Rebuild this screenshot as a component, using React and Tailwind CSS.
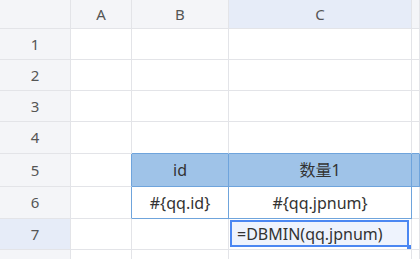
const cols = ['A', 'B', 'C', 'D'];
const rowHeights = [31, 31, 31, 32, 33, 32, 31, 20];

const cells = {
  '5-B': { text: 'id', head: true },
  '5-C': { text: '数量1', head: true },
  '5-D': { text: '', head: true },
  '6-B': { text: '#{qq.id}', body: true },
  '6-C': { text: '#{qq.jpnum}', body: true },
};

const isBlue = (r, c) => (r === 5 && ['B', 'C', 'D'].includes(c)) || (r === 6 && ['B', 'C'].includes(c));

const App = () => {
  return (
    <div
      className="h-[259px] w-[420px] overflow-hidden bg-white text-[16px] text-[#333]"
      style={{ fontFamily: '"Noto Sans", "Noto Sans CJK SC", sans-serif' }}
    >
      <div className="grid grid-cols-[71px_61px_97px_183px_1fr]">
        <div className="h-[29px] border-b border-r border-[#e3e4e8] bg-[#f4f5f8]" />
        {cols.map((c) => (
          <div
            key={c}
            className={`flex h-[29px] items-center justify-center border-b border-r border-[#e3e4e8] text-[15px] text-[#555] ${c === 'C' ? 'bg-[#e6ecf8]' : 'bg-[#f4f5f8]'}`}
          >
            {c !== 'D' && c}
          </div>
        ))}

        {rowHeights.map((h, i) => {
          const r = i + 1;
          return [
            <div
              key={`h${r}`}
              style={{ height: h }}
              className={`flex items-center justify-center border-b border-r border-[#e3e4e8] text-[15px] text-[#555] ${r === 7 ? 'bg-[#e6ecf8]' : 'bg-[#f4f5f8]'}`}
            >
              {r < 8 && r}
            </div>,
            ...cols.map((c, ci) => {
              const cell = cells[`${r}-${c}`];
              const next = cols[ci + 1];
              const rightBlue = isBlue(r, c) || (next && isBlue(r, next));
              const bottomBlue = isBlue(r, c) || isBlue(r + 1, c);
              return (
                <div
                  key={`${r}${c}`}
                  style={{ height: h }}
                  className={`relative flex items-center justify-center border-b border-r ${rightBlue ? 'border-r-[#6fa4dc]' : 'border-r-[#e3e4e8]'} ${bottomBlue ? 'border-b-[#6fa4dc]' : 'border-b-[#e3e4e8]'} ${cell?.head ? 'bg-[#9fc3e8]' : 'bg-white'}`}
                >
                  {cell?.text}
                  {r === 7 && c === 'C' && (
                    <div className="absolute left-px right-[2px] top-px bottom-[2px] flex items-center border-2 border-[#4b87f2] bg-[#eef3fd] pl-[5px]">
                      =DBMIN(qq.jpnum)
                      <div className="absolute -bottom-[4px] -right-[4px] h-[4px] w-[4px] bg-[#4b87f2]" />
                    </div>
                  )}
                </div>
              );
            }),
          ];
        })}
      </div>
    </div>
  );
};

export default App;
